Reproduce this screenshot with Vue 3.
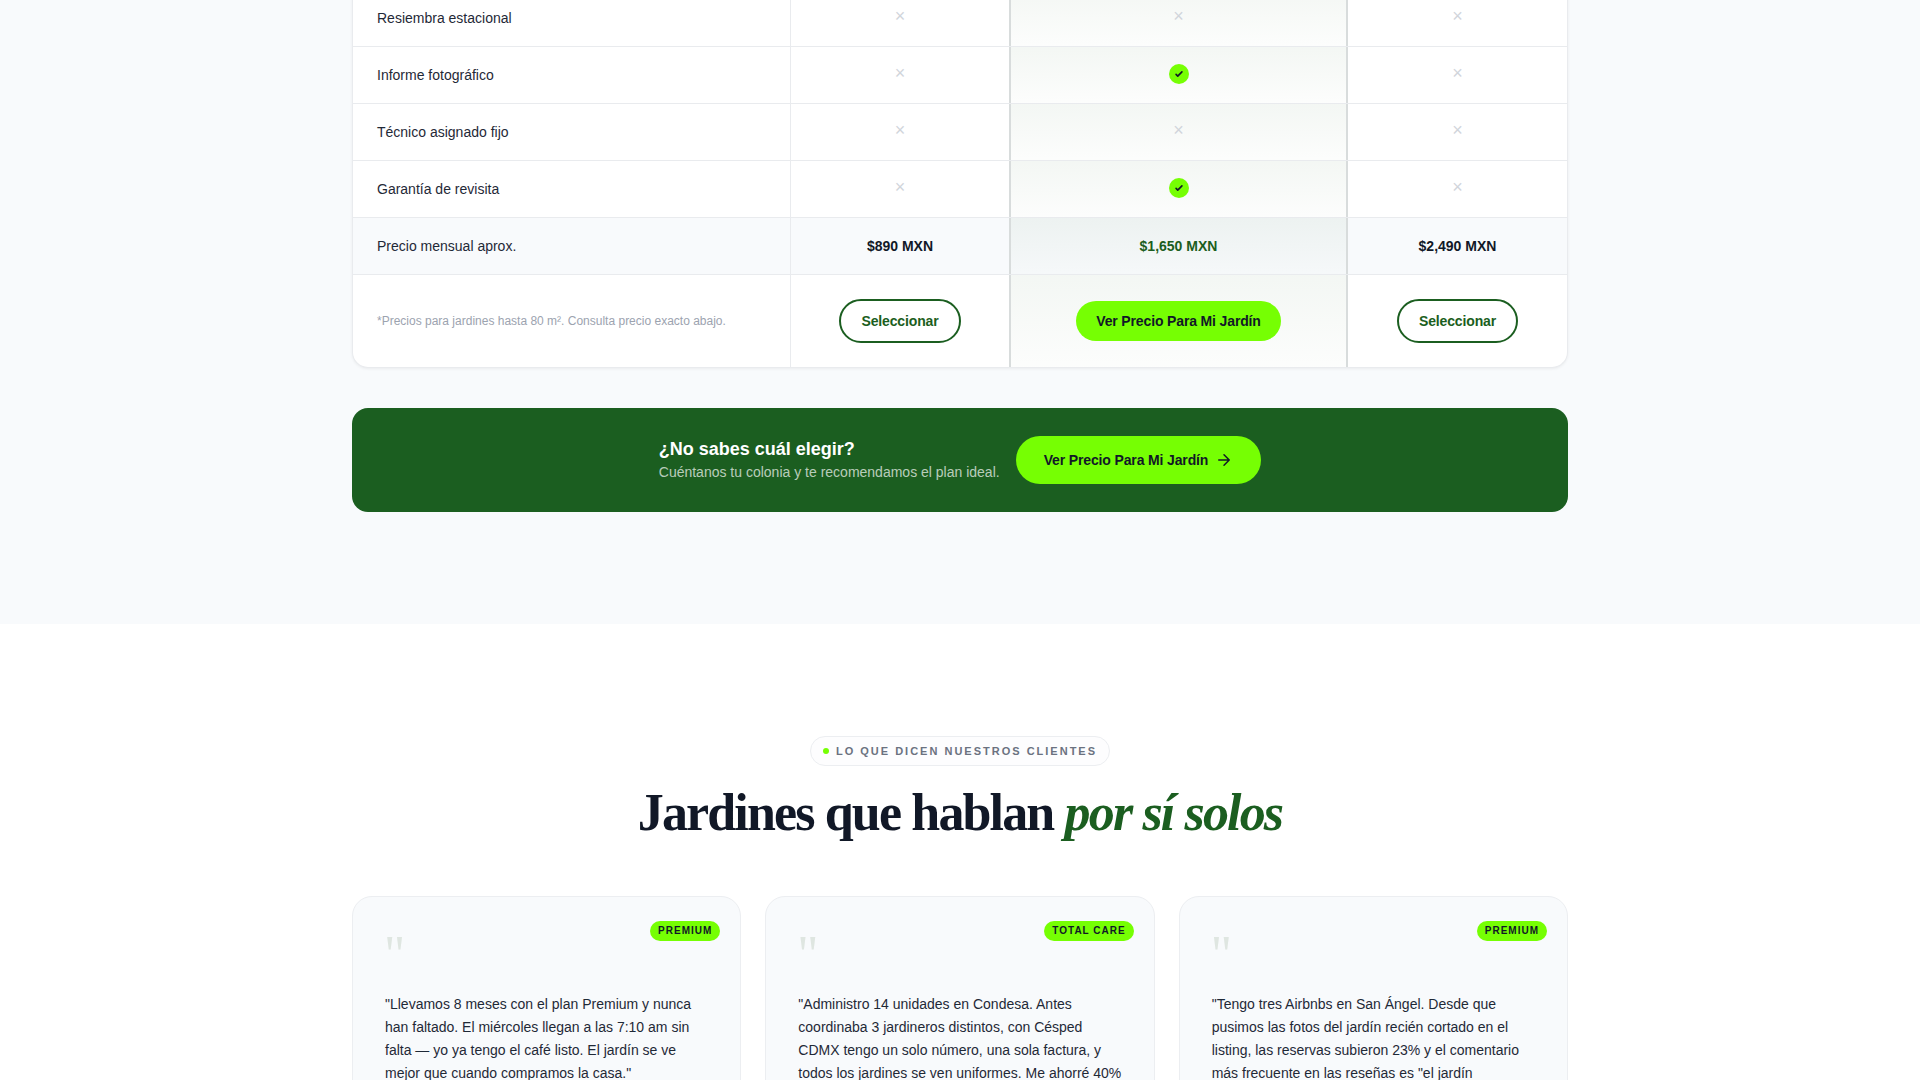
<template>
  <div class="page">
    <section class="plans">
      <div class="wrap">
        <div class="table">
          <div v-for="row in rows" :key="row.label" class="row">
            <div class="cell label">{{ row.label }}</div>
            <div class="cell mark"><span class="no">×</span></div>
            <div class="cell mark hot">
              <span v-if="row.mid" class="yes">
                <svg width="10" height="10" viewBox="0 0 24 24" fill="none" stroke="#111827" stroke-width="4" stroke-linecap="round" stroke-linejoin="round"><path d="M5 13l4 4L19 7" /></svg>
              </span>
              <span v-else class="no">×</span>
            </div>
            <div class="cell mark"><span class="no">×</span></div>
          </div>
          <div class="row price-row">
            <div class="cell label">Precio mensual aprox.</div>
            <div class="cell mark price">$890 MXN</div>
            <div class="cell mark price hot green">$1,650 MXN</div>
            <div class="cell mark price">$2,490 MXN</div>
          </div>
          <div class="row action-row">
            <div class="cell label note">*Precios para jardines hasta 80 m². Consulta precio exacto abajo.</div>
            <div class="cell mark"><button class="outline">Seleccionar</button></div>
            <div class="cell mark hot"><button class="lime">Ver Precio Para Mi Jardín</button></div>
            <div class="cell mark"><button class="outline">Seleccionar</button></div>
          </div>
        </div>

        <div class="banner">
          <div class="banner-copy">
            <h3>¿No sabes cuál elegir?</h3>
            <p>Cuéntanos tu colonia y te recomendamos el plan ideal.</p>
          </div>
          <button class="lime big">
            Ver Precio Para Mi Jardín
            <svg width="18" height="18" viewBox="0 0 24 24" fill="none" stroke="#111827" stroke-width="2" stroke-linecap="round" stroke-linejoin="round"><path d="M5 12h14M12 5l7 7-7 7" /></svg>
          </button>
        </div>
      </div>
    </section>

    <section class="reviews">
      <div class="wrap">
        <div class="head">
          <div class="pill"><i></i>LO QUE DICEN NUESTROS CLIENTES</div>
          <h2>Jardines que hablan <em>por sí solos</em></h2>
        </div>
        <div class="cards">
          <article v-for="card in cards" :key="card.text" class="card">
            <span class="badge">{{ card.plan }}</span>
            <div class="quote">"</div>
            <p>{{ card.text }}</p>
          </article>
        </div>
      </div>
    </section>
  </div>
</template>

<script setup>
const rows = [
  { label: 'Resiembra estacional', mid: false },
  { label: 'Informe fotográfico', mid: true },
  { label: 'Técnico asignado fijo', mid: false },
  { label: 'Garantía de revisita', mid: true },
];

const cards = [
  {
    plan: 'PREMIUM',
    text: '"Llevamos 8 meses con el plan Premium y nunca han faltado. El miércoles llegan a las 7:10 am sin falta — yo ya tengo el café listo. El jardín se ve mejor que cuando compramos la casa."',
  },
  {
    plan: 'TOTAL CARE',
    text: '"Administro 14 unidades en Condesa. Antes coordinaba 3 jardineros distintos, con Césped CDMX tengo un solo número, una sola factura, y todos los jardines se ven uniformes. Me ahorré 40%',
  },
  {
    plan: 'PREMIUM',
    text: '"Tengo tres Airbnbs en San Ángel. Desde que pusimos las fotos del jardín recién cortado en el listing, las reservas subieron 23% y el comentario más frecuente en las reseñas es "el jardín',
  },
];
</script>

<style>
html, body {
  margin: 0;
  height: 1080px;
  overflow: hidden;
  background: #fff;
}
</style>

<style scoped>
.page {
  height: 1080px;
  overflow: hidden;
  font-family: "Liberation Sans", Arial, sans-serif;
  color: #111827;
}
.wrap {
  width: 1216px;
  margin: 0 auto;
}
.plans {
  display: flow-root;
  background: #f8fafc;
  height: 624px;
}
/* page is scrolled, first visible row is cut by the top edge */
.table {
  margin-top: -10px;
  background: #fff;
  border: 1px solid #e9ebee;
  border-top: 0;
  border-radius: 0 0 16px 16px;
  box-shadow: 0 1px 3px rgba(0, 0, 0, 0.06);
  overflow: hidden;
}
.row {
  display: grid;
  grid-template-columns: 437px 219px 339px 1fr;
  height: 57px;
  border-bottom: 1px solid #e9ebee;
  box-sizing: border-box;
}
.action-row {
  height: 92px;
  border-bottom: 0;
}
.cell {
  display: flex;
  align-items: center;
  font-size: 14px;
  box-sizing: border-box;
}
.label {
  padding-left: 24px;
  color: #1f2937;
}
.note {
  font-size: 12px;
  color: #9ca3af;
}
.mark {
  justify-content: center;
  border-left: 1px solid #e9ebee;
}
.hot {
  border-left: 2px solid #d8dcdc;
  border-right: 2px solid #d8dcdc;
  background: linear-gradient(180deg, rgba(27, 94, 32, 0.05), rgba(27, 94, 32, 0.01));
}
.hot + .mark {
  border-left: 0;
}
.no {
  color: #d1d5db;
  font-size: 18px;
  line-height: 1;
  margin-top: -4px;
}
.yes {
  width: 20px;
  height: 20px;
  margin-top: -2px;
  border-radius: 50%;
  background: #76ff03;
  display: flex;
  align-items: center;
  justify-content: center;
}
.price-row {
  background: #f8fafc;
}
.price {
  font-weight: 700;
  color: #111827;
}
.green {
  color: #1b5e20;
}
button {
  font-family: inherit;
  font-weight: 700;
  font-size: 14px;
  letter-spacing: -0.14px;
  border-radius: 999px;
  cursor: pointer;
}
.outline {
  padding: 0 20px;
  height: 44px;
  background: #fff;
  color: #1b5e20;
  border: 2px solid #1b5e20;
}
.lime {
  height: 40px;
  padding: 0 20px;
  background: #76ff03;
  color: #111827;
  border: 0;
}
.big {
  height: 48px;
  padding: 0 28px;
  display: flex;
  align-items: center;
  gap: 7px;
}
.banner {
  margin-top: 40px;
  height: 104px;
  border-radius: 16px;
  background: #1b5e20;
  display: flex;
  align-items: center;
  justify-content: center;
  gap: 16px;
}
.banner-copy {
  padding-bottom: 1px;
}
.banner-copy h3 {
  margin: 0;
  font-size: 18px;
  line-height: 25px;
  color: #fff;
}
.banner-copy p {
  margin: 0;
  font-size: 14px;
  line-height: 20px;
  color: rgba(255, 255, 255, 0.7);
}
.reviews {
  padding-top: 112px;
  background: #fff;
}
.head {
  text-align: center;
}
.pill {
  display: inline-flex;
  align-items: center;
  gap: 7px;
  height: 30px;
  padding: 0 12px;
  box-sizing: border-box;
  border: 1px solid #eceef1;
  border-radius: 999px;
  background: #fdfdfe;
  font-size: 11px;
  font-weight: 700;
  letter-spacing: 2px;
  color: #6b7280;
}
.pill i {
  width: 6px;
  height: 6px;
  border-radius: 50%;
  background: #76ff03;
}
h2 {
  margin: 16px 0 0;
  font-family: "Liberation Serif", "Times New Roman", serif;
  font-size: 52px;
  line-height: 62px;
  font-weight: 700;
  letter-spacing: -1.85px;
  color: #111827;
}
h2 em {
  color: #1b5e20;
}
.cards {
  margin-top: 52px;
  display: grid;
  grid-template-columns: repeat(3, 1fr);
  gap: 24px;
}
.card {
  position: relative;
  height: 300px;
  padding: 32px;
  box-sizing: border-box;
  border: 1px solid #eceef1;
  border-radius: 20px;
  background: #f8fafc;
}
.badge {
  position: absolute;
  top: 24px;
  right: 20px;
  height: 20px;
  padding: 0 8px;
  border-radius: 999px;
  background: #76ff03;
  font-size: 10px;
  font-weight: 700;
  line-height: 20px;
  letter-spacing: 1px;
  color: #111827;
}
.quote {
  margin-left: -1px;
  font-family: "Liberation Serif", serif;
  font-size: 52px;
  line-height: 51px;
  height: 48px;
  color: #dfe6e1;
}
.card p {
  margin: 16px 0 0;
  font-size: 14px;
  line-height: 23px;
  color: #1f2937;
}
</style>
